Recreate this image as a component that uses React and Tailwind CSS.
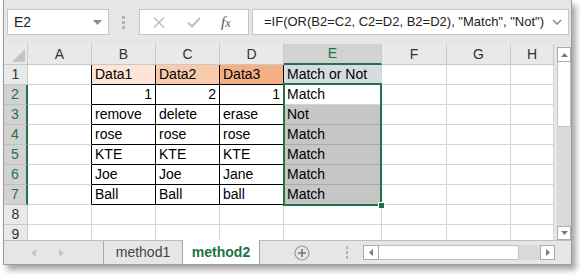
import React from "react";

const letters = ["A", "B", "C", "D", "E", "F", "G", "H"];

const data = [
  ["", "Data1", "Data2", "Data3", "Match or Not"],
  ["", "1", "2", "1", "Match"],
  ["", "remove", "delete", "erase", "Not"],
  ["", "rose", "rose", "rose", "Match"],
  ["", "KTE", "KTE", "KTE", "Match"],
  ["", "Joe", "Joe", "Jane", "Match"],
  ["", "Ball", "Ball", "ball", "Match"],
  ["", "", "", "", ""],
  ["", "", "", "", ""],
];

const row1Bg = ["", "bg-[#fce4d6]", "bg-[#f8cbad]", "bg-[#f4b084]", "bg-[#d6dce4]"];

function cellClasses(r, c) {
  const inTable = c >= 1 && c <= 3 && r >= 1 && r <= 7;
  const leftOfTable = c === 0 && r >= 1 && r <= 7;
  let right = "border-r-[#d4d4d4]";
  let bottom = "border-b-[#d4d4d4]";
  if (inTable || leftOfTable) right = "border-r-black";
  if (inTable) bottom = "border-b-black";
  let bg = "bg-white";
  if (r === 1 && c >= 1 && c <= 4) bg = row1Bg[c];
  if (c === 4 && r >= 3 && r <= 7) {
    bg = "bg-[#c6c6c6]";
    bottom = "border-b-[#ababab]";
  }
  return `${bg} border-r border-b ${right} ${bottom}`;
}

function Sheet() {
  const rows = [];
  rows.push(
    <div key="h-corner" className="h-[21px] bg-[#e9e9e9] border-r border-b border-r-[#c8c8c8] border-b-[#c8c8c8] relative">
      <svg width="13" height="13" viewBox="0 0 13 13" className="absolute left-[8px] top-[5px]">
        <polygon points="13,0 13,13 0,13" fill="#c3c3c3" />
      </svg>
    </div>
  );
  letters.forEach((l) => {
    const sel = l === "E";
    rows.push(
      <div
        key={"h-" + l}
        className={
          sel
            ? "h-[21px] bg-[#d2d2d2] border-r border-r-[#c8c8c8] border-b-2 border-b-[#217346] flex items-center justify-center text-[#217346] text-[14px]"
            : "h-[21px] bg-[#e9e9e9] border-r border-b border-r-[#c8c8c8] border-b-[#c8c8c8] flex items-center justify-center text-[#333333] text-[14px]"
        }
      >
        {l}
      </div>
    );
  });
  for (let r = 1; r <= 9; r++) {
    const selRow = r >= 2 && r <= 7;
    rows.push(
      <div
        key={"rh-" + r}
        className={
          selRow
            ? "h-[20px] bg-[#d2d2d2] border-r-2 border-b border-r-[#217346] border-b-[#c0c0c0] flex items-center justify-center text-[#217346] text-[14px]"
            : "h-[20px] bg-[#e9e9e9] border-r border-b border-r-[#c8c8c8] border-b-[#c8c8c8] flex items-center justify-center text-[#333333] text-[14px]"
        }
      >
        {r}
      </div>
    );
    for (let c = 0; c < 8; c++) {
      const text = c <= 4 ? data[r - 1][c] : "";
      const numeric = r === 2 && c >= 1 && c <= 3;
      rows.push(
        <div
          key={r + "-" + c}
          className={`h-[20px] ${cellClasses(r, c)} flex items-center ${numeric ? "justify-end pr-[3px]" : "pl-[3px]"} text-[14px] text-black whitespace-nowrap overflow-hidden`}
        >
          {text}
        </div>
      );
    }
  }
  return (
    <div className="relative w-[550px] h-[196px] overflow-hidden bg-white">
      <div className="grid grid-cols-[24px_64px_64px_64px_64px_98px_65px_64px_43px]">{rows}</div>
      <div className="absolute left-[279px] top-[39px] w-[99px] h-[123px] border-2 border-[#217346]" />
      <div className="absolute left-[374px] top-[158px] w-[7px] h-[7px] bg-[#217346] border border-white" />
    </div>
  );
}

function VScroll() {
  return (
    <div className="w-[17px] h-[196px] bg-[#e6e6e6] flex flex-col pl-[3px] pt-[3px]">
      <div className="w-[14px] h-[15px] bg-white border border-[#ababab] flex items-center justify-center">
        <svg width="7" height="4" viewBox="0 0 7 4"><polygon points="0,4 7,4 3.5,0" fill="#7a7a7a" /></svg>
      </div>
      <div className="w-[14px] h-[65px] bg-white border border-[#c2c2c2] border-t-0" />
      <div className="w-[14px] flex-1 bg-[#dadada]" />
      <div className="w-[14px] h-[14px] bg-white border border-[#ababab] flex items-center justify-center">
        <svg width="7" height="4" viewBox="0 0 7 4"><polygon points="0,0 7,0 3.5,4" fill="#7a7a7a" /></svg>
      </div>
    </div>
  );
}

function FormulaBar() {
  return (
    <div className="h-[44px] flex items-start pt-[9px] pl-[3px] bg-[#e6e6e6]">
      <div className="w-[102px] h-[26px] bg-white border border-[#c6c6c6] flex items-center pl-[6px] pr-[6px] justify-between">
        <span className="text-[14px] text-[#222]">E2</span>
        <svg width="9" height="5" viewBox="0 0 9 5"><polygon points="0,0 9,0 4.5,5" fill="#8a8a8a" /></svg>
      </div>
      <div className="ml-[13px] mt-[7px] flex flex-col gap-[2px]">
        <div className="w-[3px] h-[3px] bg-[#b4b4b4]" />
        <div className="w-[3px] h-[3px] bg-[#b4b4b4]" />
        <div className="w-[3px] h-[3px] bg-[#b4b4b4]" />
      </div>
      <div className="ml-[14px] w-[110px] h-[26px] bg-white border border-[#c6c6c6] flex items-center">
        <svg width="12" height="11" viewBox="0 0 12 11" className="ml-[13px]">
          <path d="M1 0.5 L11 10.5 M11 0.5 L1 10.5" stroke="#c0c0c0" strokeWidth="1.6" fill="none" />
        </svg>
        <svg width="14" height="11" viewBox="0 0 14 11" className="ml-[22px]">
          <path d="M1 5.5 L5 9.5 L13 1" stroke="#c0c0c0" strokeWidth="2" fill="none" />
        </svg>
        <span className="ml-[20px] text-[15px] italic text-[#555] font-['Liberation_Serif',serif] leading-none">
          f<span className="text-[12px]">x</span>
        </span>
      </div>
      <div className="ml-[3px] w-[317px] h-[26px] bg-white border border-[#c6c6c6] flex items-center pl-[11px] pr-[6px] justify-between">
        <span className="text-[13px] text-[#222] whitespace-nowrap">=IF(OR(B2=C2, C2=D2, B2=D2), "Match", "Not")</span>
        <svg width="10" height="6" viewBox="0 0 10 6"><path d="M1 1 L5 5 L9 1" stroke="#8a8a8a" strokeWidth="1.6" fill="none" /></svg>
      </div>
    </div>
  );
}

function TabBar() {
  return (
    <div className="h-[24px] bg-[#e6e6e6] border-t border-[#bdbdbd] flex items-stretch">
      <div className="w-[99px] flex items-center">
        <svg width="5" height="8" viewBox="0 0 5 8" className="ml-[27px]"><polygon points="5,0 5,8 0,4" fill="#c4c4c4" /></svg>
        <svg width="5" height="8" viewBox="0 0 5 8" className="ml-[23px]"><polygon points="0,0 0,8 5,4" fill="#c4c4c4" /></svg>
      </div>
      <div className="w-[79px] border-l border-[#a8a8a8] flex items-center justify-center text-[14px] text-[#444]">method1</div>
      <div className="w-[78px] -mt-px bg-white border-l border-r border-[#a8a8a8] flex items-center justify-center text-[14px] font-bold text-[#217346]">method2</div>
      <div className="ml-[34px] flex items-center">
        <svg width="16" height="16" viewBox="0 0 16 16">
          <circle cx="8" cy="8" r="7" stroke="#9a9a9a" strokeWidth="1.2" fill="none" />
          <path d="M8 4 V12 M4 8 H12" stroke="#777" strokeWidth="1.6" />
        </svg>
      </div>
      <div className="ml-[36px] flex flex-col justify-center gap-[2px]">
        <div className="w-[2px] h-[3px] bg-[#b4b4b4]" />
        <div className="w-[2px] h-[3px] bg-[#b4b4b4]" />
        <div className="w-[2px] h-[3px] bg-[#b4b4b4]" />
      </div>
      <div className="ml-[15px] flex items-center">
        <div className="w-[16px] h-[15px] bg-white border border-[#ababab] flex items-center justify-center">
          <svg width="4" height="7" viewBox="0 0 4 7"><polygon points="4,0 4,7 0,3.5" fill="#7a7a7a" /></svg>
        </div>
        <div className="w-[140px] h-[15px] bg-white border border-[#c2c2c2] border-l-0" />
        <div className="w-[21px] h-[15px] bg-[#dadada]" />
        <div className="w-[15px] h-[15px] bg-white border border-[#ababab] flex items-center justify-center">
          <svg width="4" height="7" viewBox="0 0 4 7"><polygon points="0,0 0,7 4,3.5" fill="#7a7a7a" /></svg>
        </div>
      </div>
    </div>
  );
}

export default function App() {
  return (
    <div className="w-[581px] h-[275px] bg-white font-['Liberation_Sans',Arial,sans-serif] overflow-hidden">
      <div className="ml-[3px] w-[569px] h-[265px] border border-t-0 border-[#9c9c9c] bg-[#e6e6e6] shadow-[4px_5px_6px_rgba(0,0,0,0.35)] flex flex-col">
        <FormulaBar />
        <div className="flex">
          <Sheet />
          <VScroll />
        </div>
        <TabBar />
      </div>
    </div>
  );
}
